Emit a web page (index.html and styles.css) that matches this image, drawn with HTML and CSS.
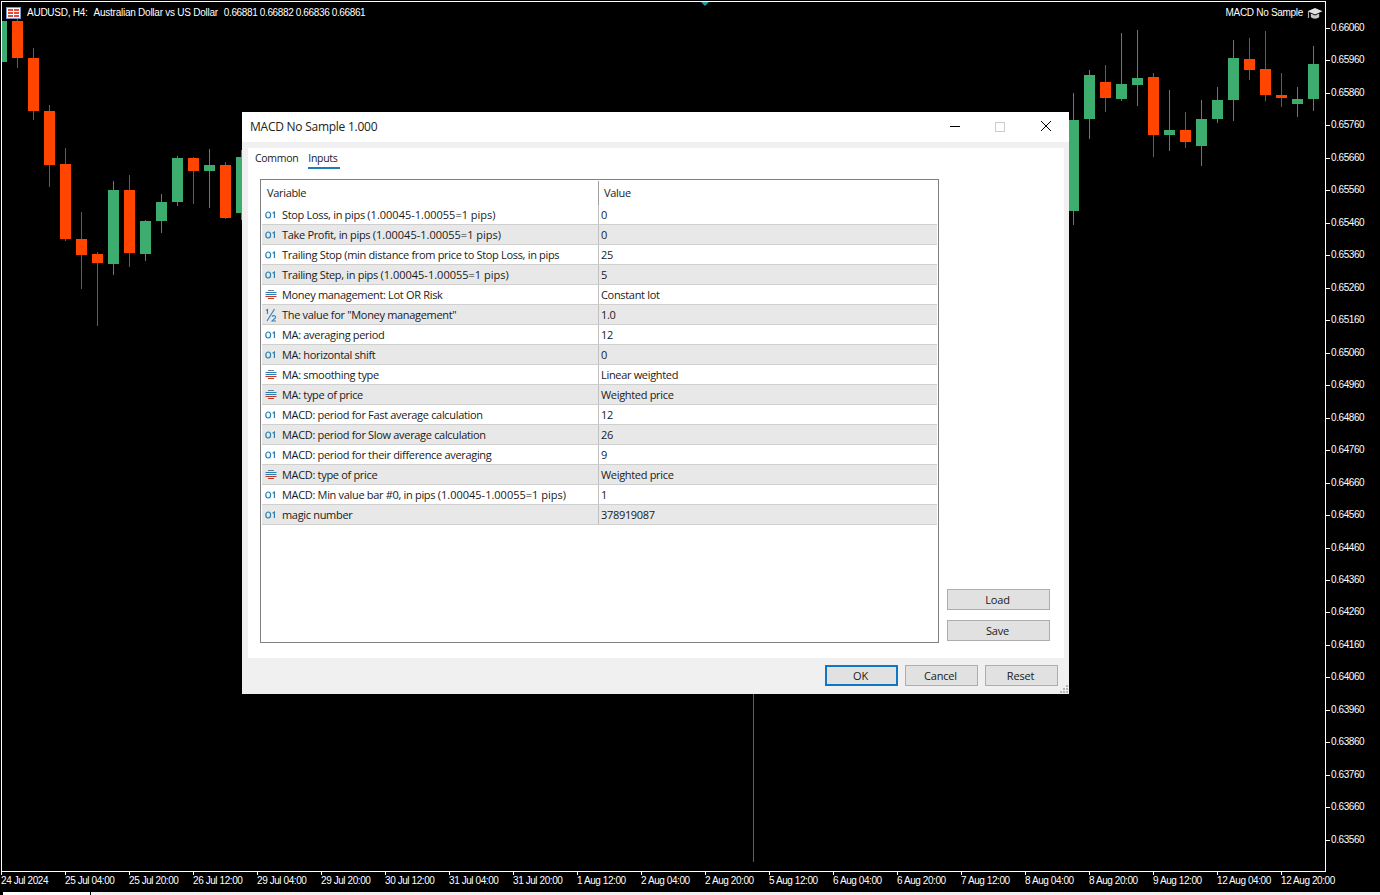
FILE: index.html
```html
<!DOCTYPE html>
<html lang="en">
<head>
    <meta charset="UTF-8">
    <title>AUDUSD, H4 - MACD No Sample</title>
    <link rel="stylesheet" href="styles.css">
</head>
<body>

<div class="terminal">
    <div class="chart">
        <svg class="candles" width="1324" height="870" viewBox="0 0 1324 870" shape-rendering="crispEdges">
            <g id="candle-group"></g>
        </svg>
        <div class="chart-title">
            <svg class="flag" width="15" height="12" viewBox="0 0 15 12">
                <rect x="0.5" y="0.5" width="14" height="11" fill="#fff" stroke="#6f9ad6"/>
                <rect x="2" y="2" width="5" height="2" fill="#e04b3a"/>
                <rect x="8" y="2" width="5" height="2" fill="#e04b3a"/>
                <rect x="2" y="5" width="5" height="2" fill="#e04b3a"/>
                <rect x="8" y="5" width="5" height="2" fill="#e04b3a"/>
                <rect x="2" y="8" width="5" height="2" fill="#e04b3a"/>
                <rect x="8" y="8" width="5" height="2" fill="#e04b3a"/>
            </svg>
            <span>AUDUSD, H4:</span>
            <span>Australian Dollar vs US Dollar</span>
            <span class="ohlc">0.66881 0.66882 0.66836 0.66861</span>
        </div>
        <div class="expert-name">
            <span>MACD No Sample</span>
            <svg width="16" height="13" viewBox="0 0 16 13">
                <path d="M8 1 L15.5 4.2 L8 7.4 L0.5 4.2 Z" fill="#e2e2e2"/>
                <path d="M3.8 6.6 V10 C6 12.2 10 12.2 12.2 10 V6.6 L8 8.6 Z" fill="#c8c8c8"/>
                <path d="M1.5 4.6 V11" stroke="#a8a8a8" stroke-width="1.2"/>
            </svg>
        </div>
        <div class="marker"></div>
    </div>
    <div class="price-axis" id="price-axis"></div>
    <div class="time-axis" id="time-axis"></div>
    <div class="tab-strip"><div class="tab"></div></div>
</div>

<div class="dialog">
    <div class="dialog-title">
        <span>MACD No Sample 1.000</span>
        <div class="window-btns">
            <svg width="12" height="12" viewBox="0 0 12 12"><path d="M1 5.5 H11" stroke="#000"/></svg>
            <svg width="12" height="12" viewBox="0 0 12 12"><rect x="1.5" y="1.5" width="9" height="9" fill="none" stroke="#ccc"/></svg>
            <svg class="close-btn" width="12" height="12" viewBox="0 0 12 12"><path d="M1 0 L11 10 M11 0 L1 10" stroke="#000"/></svg>
        </div>
    </div>
    <div class="dialog-body">
        <div class="tabs">
            <span class="tab-link">Common</span>
            <span class="tab-link active">Inputs</span>
        </div>
        <div class="panel">
            <div class="params">
                <div class="row head"><div class="cell-var">Variable</div><div class="cell-val">Value</div></div>
                <div id="param-rows"></div>
            </div>
            <div class="side-btns">
                <button type="button" class="btn">Load</button>
                <button type="button" class="btn">Save</button>
            </div>
        </div>
    </div>
    <div class="dialog-foot">
        <button type="button" class="btn btn-ok">OK</button>
        <button type="button" class="btn">Cancel</button>
        <button type="button" class="btn">Reset</button>
        <svg class="grip" width="10" height="10" viewBox="0 0 10 10" fill="#b8b8b8">
            <rect x="7" y="1" width="2" height="2"/>
            <rect x="4" y="4" width="2" height="2"/><rect x="7" y="4" width="2" height="2"/>
            <rect x="1" y="7" width="2" height="2"/><rect x="4" y="7" width="2" height="2"/><rect x="7" y="7" width="2" height="2"/>
        </svg>
    </div>
</div>

<script src="page.js"></script>
</body>
</html>
```

FILE: styles.css
```css
* {
    box-sizing: border-box;
}

html, body {
    margin: 0;
    height: 895px;
    overflow: hidden;
}

body {
    background-color: #000;
    font-family: "Open Sans", "Noto Sans", Arial, sans-serif;
    font-size: 11px;
    color: #fff;
    position: relative;
}

/* terminal */
.terminal {
    display: grid;
    grid-template-columns: 1326px 54px;
    grid-template-rows: 872px 20px 3px;
    height: 895px;
}

.chart {
    position: relative;
    margin: 1px 0 0 1px;
    border: 1px solid #fff;
    overflow: hidden;
}

.candles {
    position: absolute;
    left: 0;
    top: 0;
}

.chart-title {
    position: absolute;
    left: 4px;
    top: 4px;
    display: flex;
    align-items: center;
    gap: 6px;
    font-family: "Liberation Sans", Arial, sans-serif;
    font-size: 10px;
    letter-spacing: -0.25px;
    line-height: 14px;
    white-space: nowrap;
}

.ohlc {
    letter-spacing: -0.37px;
}

.expert-name {
    position: absolute;
    right: 2px;
    top: 4px;
    display: flex;
    align-items: center;
    gap: 4px;
    font-family: "Liberation Sans", Arial, sans-serif;
    font-size: 10px;
    letter-spacing: -0.3px;
    line-height: 14px;
}

.marker {
    position: absolute;
    left: 698px;
    top: -1px;
    width: 0;
    height: 0;
    border-left: 5px solid transparent;
    border-right: 5px solid transparent;
    border-top: 5px solid #1f9aa8;
}

/* axes */
.price-axis {
    padding-top: 22px;
    font-family: "Liberation Sans", Arial, sans-serif;
    font-size: 10px;
    letter-spacing: -0.42px;
}

.price {
    display: flex;
    align-items: flex-start;
    height: 32.48px;
    line-height: 12px;
    gap: 1px;
}

.price::before {
    content: "";
    width: 4px;
    height: 1px;
    margin-top: 6px;
    background-color: #fff;
}

.time-axis {
    grid-column: 1 / 3;
    display: flex;
    padding-left: 1px;
    font-family: "Liberation Sans", Arial, sans-serif;
    font-size: 10px;
    letter-spacing: -0.42px;
    white-space: nowrap;
}

.time {
    flex: 0 0 64px;
    padding-top: 3px;
    position: relative;
    line-height: 12px;
}

.time::before {
    content: "";
    position: absolute;
    left: 0;
    top: -1px;
    width: 1px;
    height: 4px;
    background-color: #fff;
}

.tab-strip {
    grid-column: 1 / 3;
    background: linear-gradient(to right, #000 91px, #f0f0f0 91px);
    padding-left: 3px;
}

.tab {
    width: 87px;
    height: 3px;
    background-color: #fff;
}

/* dialog */
.dialog {
    position: absolute;
    left: 242px;
    top: 112px;
    width: 827px;
    height: 582px;
    background-color: #f0f0f0;
    color: #1a1a1a;
    font-family: "Open Sans", "Noto Sans", Arial, sans-serif;
    font-size: 11px;
    display: flex;
    flex-direction: column;
}

.dialog-title {
    height: 30px;
    padding: 0 17px 2px 8px;
    background-color: #fff;
    display: flex;
    align-items: center;
    justify-content: space-between;
    font-size: 12px;
    letter-spacing: -0.25px;
    color: #222;
}

.window-btns {
    display: flex;
    gap: 33px;
    margin-top: 2px;
}

.close-btn {
    margin-left: 1px;
}

.dialog-body {
    height: 510px;
    margin: 6px 5px 0 6px;
    background-color: #fff;
    display: flex;
    flex-direction: column;
}

.tabs {
    display: flex;
    gap: 10px;
    padding: 2px 0 0 7px;
    height: 31px;
    font-size: 10.5px;
    letter-spacing: -0.3px;
}

.tab-link {
    height: 19px;
    line-height: 16px;
}

.tab-link.active {
    width: 32px;
    border-bottom: 2px solid #1a7fb8;
}

.panel {
    display: flex;
    padding-left: 12px;
    gap: 8px;
}

.params {
    width: 679px;
    height: 464px;
    border: 1px solid #808080;
    padding: 1px;
    letter-spacing: -0.32px;
}

.row {
    display: flex;
    height: 20px;
    line-height: 19px;
    border-bottom: 1px solid #cfcfcf;
    background-color: #fff;
}

.row:nth-child(even) {
    background-color: #e8e8e8;
}

.row.head {
    height: 24px;
    line-height: 24px;
    border-bottom: none;
}

.row.head .cell-var {
    padding-left: 5px;
    border-right: 1px solid #a0a0a0;
}

.cell-var {
    width: 337px;
    display: flex;
    align-items: center;
    gap: 5px;
    padding-left: 3px;
    border-right: 1px solid #c0c0c0;
    white-space: nowrap;
}

.cell-val {
    flex: 1;
    padding-left: 2px;
    white-space: nowrap;
}

.head .cell-val {
    padding-left: 5px;
}

.label {
    white-space: pre;
}

.nums {
    letter-spacing: 0;
}

.icon {
    flex: 0 0 12px;
    display: block;
}

.side-btns {
    display: flex;
    flex-direction: column;
    gap: 10px;
    margin-top: 410px;
}

.btn {
    width: 103px;
    height: 21px;
    padding: 0 2px 0 0;
    background-color: #e1e1e1;
    border: 1px solid #adadad;
    font-family: inherit;
    font-size: 11px;
    letter-spacing: -0.2px;
    color: #1a1a1a;
}

.dialog-foot {
    flex: 1;
    display: flex;
    align-items: flex-start;
    justify-content: flex-end;
    gap: 7px;
    padding: 7px 11px 0 0;
    position: relative;
}

.dialog-foot .btn {
    width: 73px;
}

.btn-ok {
    border: 2px solid #0f77c4;
}

.grip {
    position: absolute;
    right: 0;
    bottom: 0;
}
```

FILE: page.js
```js
// candles: x center, body top, body bottom, wick top, wick bottom, green or red
const candles = [
    [1, 21, 62, 18, 62, 'g'],
    [17, 21, 58, 18, 68, 'r'],
    [33, 58, 111, 48, 120, 'r'],
    [49, 111, 165, 105, 187, 'r'],
    [65, 164, 239, 148, 241, 'r'],
    [81, 239, 255, 212, 289, 'r'],
    [97, 254, 263, 252, 326, 'r'],
    [113, 190, 264, 181, 275, 'g'],
    [129, 190, 253, 175, 267, 'r'],
    [145, 221, 254, 220, 261, 'g'],
    [161, 202, 221, 194, 233, 'g'],
    [177, 158, 202, 156, 206, 'g'],
    [193, 158, 171, 157, 204, 'r'],
    [209, 165, 171, 149, 208, 'g'],
    [225, 165, 218, 162, 219, 'r'],
    [241, 157, 213, 150, 220, 'g'],
    [753, 500, 502, 500, 862, 'r'],
    [1073, 120, 211, 93, 225, 'g'],
    [1089, 75, 119, 70, 139, 'g'],
    [1105, 82, 98, 65, 112, 'r'],
    [1121, 84, 99, 33, 101, 'g'],
    [1137, 78, 85, 30, 106, 'g'],
    [1153, 77, 135, 73, 157, 'r'],
    [1169, 130, 135, 90, 151, 'g'],
    [1185, 130, 142, 112, 148, 'r'],
    [1201, 119, 146, 100, 166, 'g'],
    [1217, 100, 119, 87, 123, 'g'],
    [1233, 58, 100, 40, 121, 'g'],
    [1249, 59, 70, 38, 80, 'r'],
    [1265, 69, 95, 31, 101, 'r'],
    [1281, 95, 98, 73, 107, 'r'],
    [1297, 99, 104, 87, 117, 'g'],
    [1313, 64, 99, 46, 111, 'g']
];

const svgNs = 'http://www.w3.org/2000/svg';
const group = document.getElementById('candle-group');

function addRect(x, y, w, h, fill) {
    const r = document.createElementNS(svgNs, 'rect');
    r.setAttribute('x', x);
    r.setAttribute('y', y);
    r.setAttribute('width', w);
    r.setAttribute('height', h);
    r.setAttribute('fill', fill);
    group.appendChild(r);
}

candles.forEach(function (c) {
    const body = c[5] === 'g' ? '#3cad6e' : '#ff4500';
    const wick = c[5] === 'g' ? '#4a8a64' : '#c8321c';
    // chart starts at 2,2 on the page
    addRect(c[0] - 2, c[3] - 2, 1, c[4] - c[3], wick);
    addRect(c[0] - 7, c[1] - 2, 11, c[2] - c[1], body);
});

const priceAxis = document.getElementById('price-axis');
for (let i = 0; i < 26; i++) {
    const p = document.createElement('div');
    p.className = 'price';
    p.textContent = (0.6606 - i * 0.001).toFixed(5);
    priceAxis.appendChild(p);
}

const times = ['24 Jul 2024', '25 Jul 04:00', '25 Jul 20:00', '26 Jul 12:00', '29 Jul 04:00', '29 Jul 20:00',
    '30 Jul 12:00', '31 Jul 04:00', '31 Jul 20:00', '1 Aug 12:00', '2 Aug 04:00', '2 Aug 20:00', '5 Aug 12:00',
    '6 Aug 04:00', '6 Aug 20:00', '7 Aug 12:00', '8 Aug 04:00', '8 Aug 20:00', '9 Aug 12:00', '12 Aug 04:00',
    '12 Aug 20:00'];
const timeAxis = document.getElementById('time-axis');
times.forEach(function (t) {
    const d = document.createElement('div');
    d.className = 'time';
    d.textContent = t;
    timeAxis.appendChild(d);
});

const iconInt = '<svg class="icon" width="12" height="10" viewBox="0 0 12 10" fill="none" stroke="#2a7fb0" stroke-width="1.2">' +
    '<ellipse cx="3.2" cy="5" rx="2.4" ry="3"/><path d="M7.6 3.2 L9.4 2 V8"/></svg>';
const iconEnum = '<svg class="icon" width="12" height="10" viewBox="0 0 12 10">' +
    '<path d="M3 0.5 H9" stroke="#6a7f95"/><path d="M0.5 2.5 H11.5" stroke="#2a7fb0"/><path d="M0.5 4.5 H11.5" stroke="#2a7fb0"/>' +
    '<path d="M0.5 6.5 H11.5" stroke="#c0392b"/><path d="M3 8.5 H9" stroke="#c0392b"/></svg>';
const iconDouble = '<svg class="icon" width="12" height="14" viewBox="0 0 12 14" fill="none" stroke="#2f80b5" stroke-width="1.1">' +
    '<path d="M1 2.5 L2.5 1.5 V6"/><path d="M9.5 1 L2 13"/><path d="M7 8.5 C8 7 11 7.5 10.5 9.5 C10 11 8 11.5 7 13 H11"/></svg>';

const params = [
    [iconInt, 'Stop Loss, in pips ', '0', '(1.00045-1.00055=1 pips)'],
    [iconInt, 'Take Profit, in pips ', '0', '(1.00045-1.00055=1 pips)'],
    [iconInt, 'Trailing Stop (min distance from price to Stop Loss, in pips', '25'],
    [iconInt, 'Trailing Step, in pips ', '5', '(1.00045-1.00055=1 pips)'],
    [iconEnum, 'Money management: Lot OR Risk', 'Constant lot'],
    [iconDouble, 'The value for "Money management"', '1.0'],
    [iconInt, 'MA: averaging period', '12'],
    [iconInt, 'MA: horizontal shift', '0'],
    [iconEnum, 'MA: smoothing type', 'Linear weighted'],
    [iconEnum, 'MA: type of price', 'Weighted price'],
    [iconInt, 'MACD: period for Fast average calculation', '12'],
    [iconInt, 'MACD: period for Slow average calculation', '26'],
    [iconInt, 'MACD: period for their difference averaging', '9'],
    [iconEnum, 'MACD: type of price', 'Weighted price'],
    [iconInt, 'MACD: Min value bar #0, in pips ', '1', '(1.00045-1.00055=1 pips)'],
    [iconInt, 'magic number', '378919087']
];

const rowsBox = document.getElementById('param-rows');
params.forEach(function (p) {
    const row = document.createElement('div');
    row.className = 'row';
    row.innerHTML = '<div class="cell-var">' + p[0] + '<span class="label"></span></div><div class="cell-val"></div>';
    const label = row.querySelector('.label');
    label.textContent = p[1];
    if (p[3]) {
        const nums = document.createElement('span');
        nums.className = 'nums';
        nums.textContent = p[3];
        label.appendChild(nums);
    }
    row.querySelector('.cell-val').textContent = p[2];
    rowsBox.appendChild(row);
});
```
